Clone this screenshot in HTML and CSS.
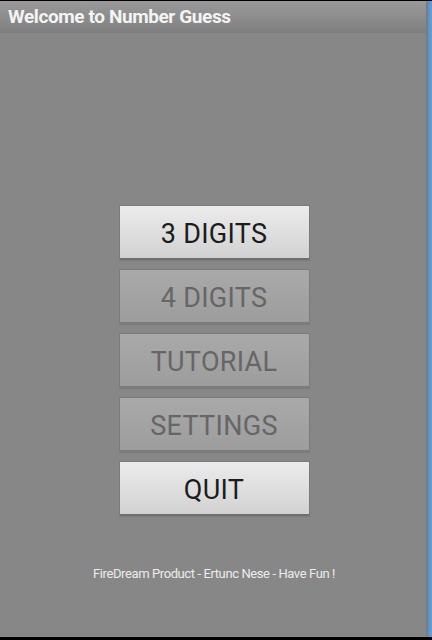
FILE: index.html
```html
<!DOCTYPE html>
<html lang="en">
  <head>
    <title>Number Guess</title>
    <link rel="stylesheet" href="styles.css">
  </head>
  <body>
    <div class="screen">
      <div class="app">
        <div class="titlebar">Welcome to Number Guess</div>
        <div class="menu">
          <button class="button">3 DIGITS</button>
          <button class="button off">4 DIGITS</button>
          <button class="button off">TUTORIAL</button>
          <button class="button off">SETTINGS</button>
          <button class="button">QUIT</button>
        </div>
        <p class="footer">FireDream Product - Ertunc Nese - Have Fun !</p>
      </div>
      <div class="edge"></div>
    </div>
  </body>
</html>
```

FILE: styles.css
```css
body {
  margin: 0;
  background: #000;
  font-family: Roboto, "Liberation Sans", sans-serif;
}
.screen {
  display: flex;
  height: 636px;
  margin-top: 1px;
}
.app {
  flex: 1;
  display: flex;
  flex-direction: column;
  background: #878787;
}
.edge {
  width: 6px;
  background: linear-gradient(to right, #7a7a7a 0, #7a7a7a 1px, #5b8fc4 2px, #6a9fd2 6px);
}
.titlebar {
  height: 32px;
  padding-left: 8px;
  line-height: 31px;
  font-size: 19px;
  font-weight: bold;
  color: #f4f4f4;
  letter-spacing: -0.4px;
  background: linear-gradient(#9a9a9a, #858585 80%, #7d7d7d);
}
.menu {
  display: flex;
  flex-direction: column;
  align-items: center;
  gap: 10px;
  margin-top: 173px;
  margin-left: 2px;
}
.button {
  width: 189px;
  height: 54px;
  padding-top: 4px;
  border: none;
  border-bottom: 2px solid #6f6f6f;
  font-family: Roboto, "Liberation Sans", sans-serif;
  font-size: 27px;
  letter-spacing: 0.3px;
  color: #1c1c1c;
  background: linear-gradient(#ececec, #d2d2d2);
  box-shadow: 0 0 0 1px #7b7b7b;
}
.button.off {
  color: #666;
  background: linear-gradient(#a9a9a9, #9d9d9d);
  border-bottom-color: #7b7b7b;
}
.footer {
  margin: 50px 0 0 2px;
  text-align: center;
  font-size: 13px;
  color: #ececec;
  letter-spacing: -0.4px;
}
```
